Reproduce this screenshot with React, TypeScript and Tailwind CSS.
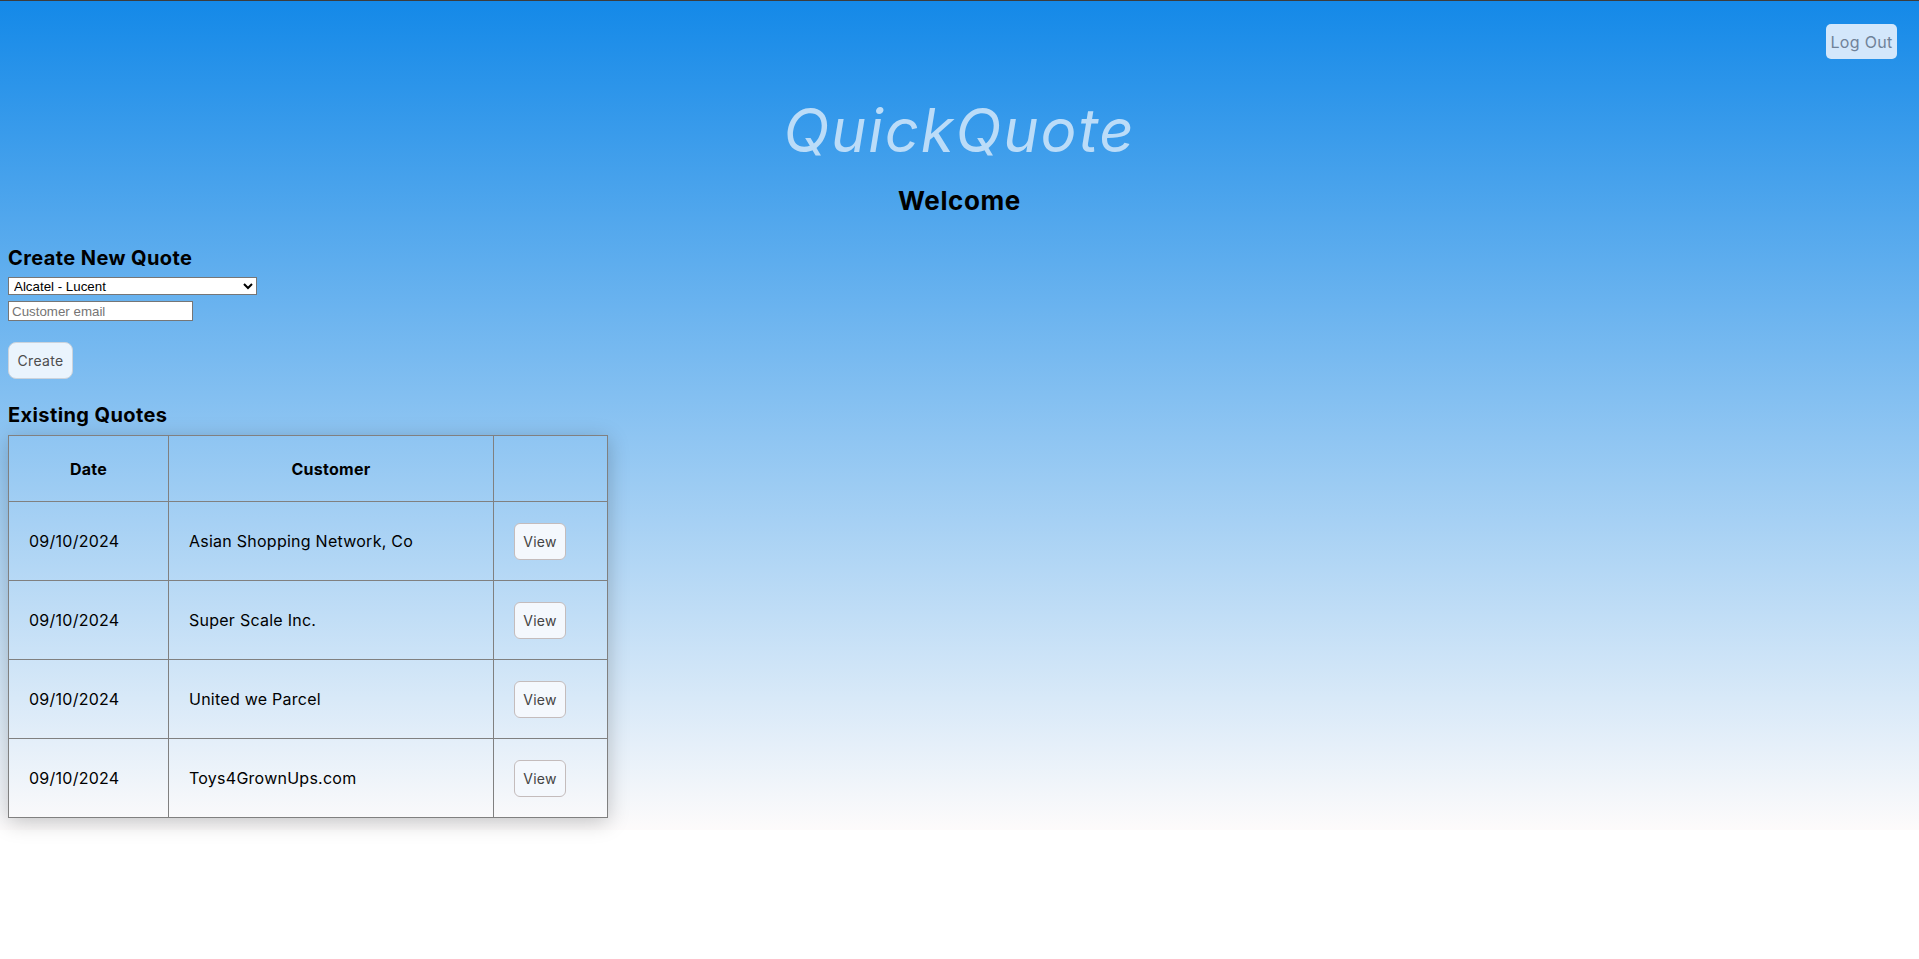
import React, { useState } from 'react';

const quotes = [
  { date: '09/10/2024', customer: 'Asian Shopping Network, Co' },
  { date: '09/10/2024', customer: 'Super Scale Inc.' },
  { date: '09/10/2024', customer: 'United we Parcel' },
  { date: '09/10/2024', customer: 'Toys4GrownUps.com' },
];

const companies = ['Alcatel - Lucent', 'Asian Shopping Network, Co', 'Super Scale Inc.', 'United we Parcel', 'Toys4GrownUps.com'];

const App = () => {
  const [company, setCompany] = useState(companies[0]);
  const [email, setEmail] = useState('');

  return (
    <div className="min-h-screen bg-white font-['Inter',sans-serif] text-black">
      <div className="border-t border-[#3c3c3c] bg-[linear-gradient(#1489e8,#fdfbfb)] px-2 pb-[12px]">
        <div className="flex justify-end pt-[23px] pr-[14px]">
          <button className="h-[35px] w-[71px] rounded-[5px] bg-[#d3e7fb] text-[16px] tracking-[0.3px] text-[#6f8299]">
            Log Out
          </button>
        </div>

        <h1 className="mt-[41px] text-center text-[60px] leading-none italic font-normal tracking-[1.8px] text-[#bbdcf8]">
          QuickQuote
        </h1>
        <h2 className="mt-[28px] text-center text-[26px] leading-none font-bold tracking-[0.6px]">Welcome</h2>

        <h3 className="mt-[34px] text-[20px] leading-none font-bold tracking-[0.4px]">Create New Quote</h3>
        <div className="mt-[9px] flex flex-col items-start gap-[6px] font-['Liberation_Sans',Arial,sans-serif] text-[13.33px]">
          <select
            value={company}
            onChange={(e) => setCompany(e.target.value)}
            className="h-[18px] w-[249px] border border-[#767676] bg-white pl-[1px] text-black"
          >
            {companies.map((c) => (
              <option key={c} value={c}>
                {c}
              </option>
            ))}
          </select>
          <input
            type="email"
            value={email}
            onChange={(e) => setEmail(e.target.value)}
            placeholder="Customer email"
            className="h-[20px] w-[185px] border border-[#767676] bg-white px-[3px] text-black placeholder:text-[#757575]"
          />
        </div>
        <button className="mt-[21px] h-[37px] w-[65px] rounded-[8px] border border-[#cbd3dc] bg-[#eaf4fd] text-[14px] tracking-[0.3px] text-[#4d4d4d]">
          Create
        </button>

        <h3 className="mt-[26px] text-[20px] leading-none font-bold tracking-[0.4px]">Existing Quotes</h3>
        <table className="mt-[10px] w-[600px] border-collapse border border-[#808080] text-[16px] tracking-[0.25px] shadow-[0_4px_20px_rgba(0,0,0,0.22)]">
          <thead>
            <tr className="h-[66px]">
              <th className="w-[160px] border border-[#808080] text-center font-bold">Date</th>
              <th className="w-[325px] border border-[#808080] text-center font-bold">Customer</th>
              <th className="border border-[#808080]"></th>
            </tr>
          </thead>
          <tbody>
            {quotes.map((q) => (
              <tr key={q.customer} className="h-[79px]">
                <td className="border border-[#808080] px-5">{q.date}</td>
                <td className="border border-[#808080] px-5">{q.customer}</td>
                <td className="border border-[#808080] px-5">
                  <button className="h-[37px] w-[52px] rounded-[6px] border border-[#c4bcbc] bg-[#f4f8fd] text-[14px] text-[#444]">
                    View
                  </button>
                </td>
              </tr>
            ))}
          </tbody>
        </table>
      </div>
    </div>
  );
};

export default App;
